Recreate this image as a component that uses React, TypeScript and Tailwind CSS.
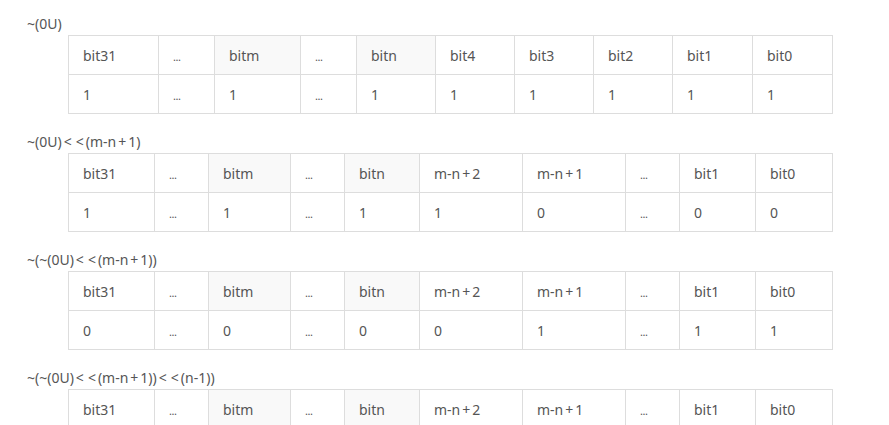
import React from 'react';

type Cell = { text: string; shaded?: boolean };

interface BitTable {
  label: string;
  widths: number[];
  head: Cell[];
  row: string[];
}

const wideCols = [90, 56, 86, 56, 79, 79, 79, 79, 80, 80];
const shiftCols = [86, 54, 82, 54, 75, 103, 103, 54, 76, 77];

const shiftHead: Cell[] = [
  { text: 'bit31' },
  { text: '...' },
  { text: 'bitm', shaded: true },
  { text: '...' },
  { text: 'bitn', shaded: true },
  { text: 'm-n+2' },
  { text: 'm-n+1' },
  { text: '...' },
  { text: 'bit1' },
  { text: 'bit0' },
];

const tables: BitTable[] = [
  {
    label: '~(0U)',
    widths: wideCols,
    head: [
      { text: 'bit31' },
      { text: '...' },
      { text: 'bitm', shaded: true },
      { text: '...' },
      { text: 'bitn', shaded: true },
      { text: 'bit4' },
      { text: 'bit3' },
      { text: 'bit2' },
      { text: 'bit1' },
      { text: 'bit0' },
    ],
    row: ['1', '...', '1', '...', '1', '1', '1', '1', '1', '1'],
  },
  {
    label: '~(0U)<<(m-n+1)',
    widths: shiftCols,
    head: shiftHead,
    row: ['1', '...', '1', '...', '1', '1', '0', '...', '0', '0'],
  },
  {
    label: '~(~(0U)<<(m-n+1))',
    widths: shiftCols,
    head: shiftHead,
    row: ['0', '...', '0', '...', '0', '0', '1', '...', '1', '1'],
  },
  {
    label: '~(~(0U)<<(m-n+1))<<(n-1))',
    widths: shiftCols,
    head: shiftHead,
    row: ['0', '...', '1', '...', '1', '0', '0', '...', '0', '0'],
  },
];

// the original font draws < and + with wide side bearings
const Expr = ({ text }: { text: string }) => {
  if (text === '...') return <span className="text-[11px] tracking-[-0.5px]">...</span>;
  return (
    <>
      {text.split(/([<+])/).map((part, i) =>
        part === '<' || part === '+' ? (
          <span key={i} className="px-[2px]">
            {part}
          </span>
        ) : (
          part
        ),
      )}
    </>
  );
};

const Block = ({ table }: { table: BitTable }) => (
  <section className="mt-[18px] first:mt-0">
    <p className="h-5 leading-5">
      <Expr text={table.label} />
    </p>
    <table className="mt-px ml-[41px] w-[765px] table-fixed border-collapse">
      <colgroup>
        {table.widths.map((w, i) => (
          <col key={i} style={{ width: w }} />
        ))}
      </colgroup>
      <tbody>
        <tr>
          {table.head.map((c, i) => (
            <td
              key={i}
              className={`h-[39px] border border-[#dddddd] px-[14px] py-0 ${c.shaded ? 'bg-[#f9f9f9]' : 'bg-white'}`}
            >
              <Expr text={c.text} />
            </td>
          ))}
        </tr>
        <tr>
          {table.row.map((t, i) => (
            <td key={i} className="h-[39px] border border-[#dddddd] px-[14px] py-0">
              <Expr text={t} />
            </td>
          ))}
        </tr>
      </tbody>
    </table>
  </section>
);

export default function App() {
  return (
    <div className="h-[425px] w-[889px] overflow-hidden bg-white pl-[27px] pt-[14px] font-['Noto_Sans',sans-serif] text-[14px] text-[#555555]">
      {tables.map((t, i) => (
        <Block key={i} table={t} />
      ))}
    </div>
  );
}
